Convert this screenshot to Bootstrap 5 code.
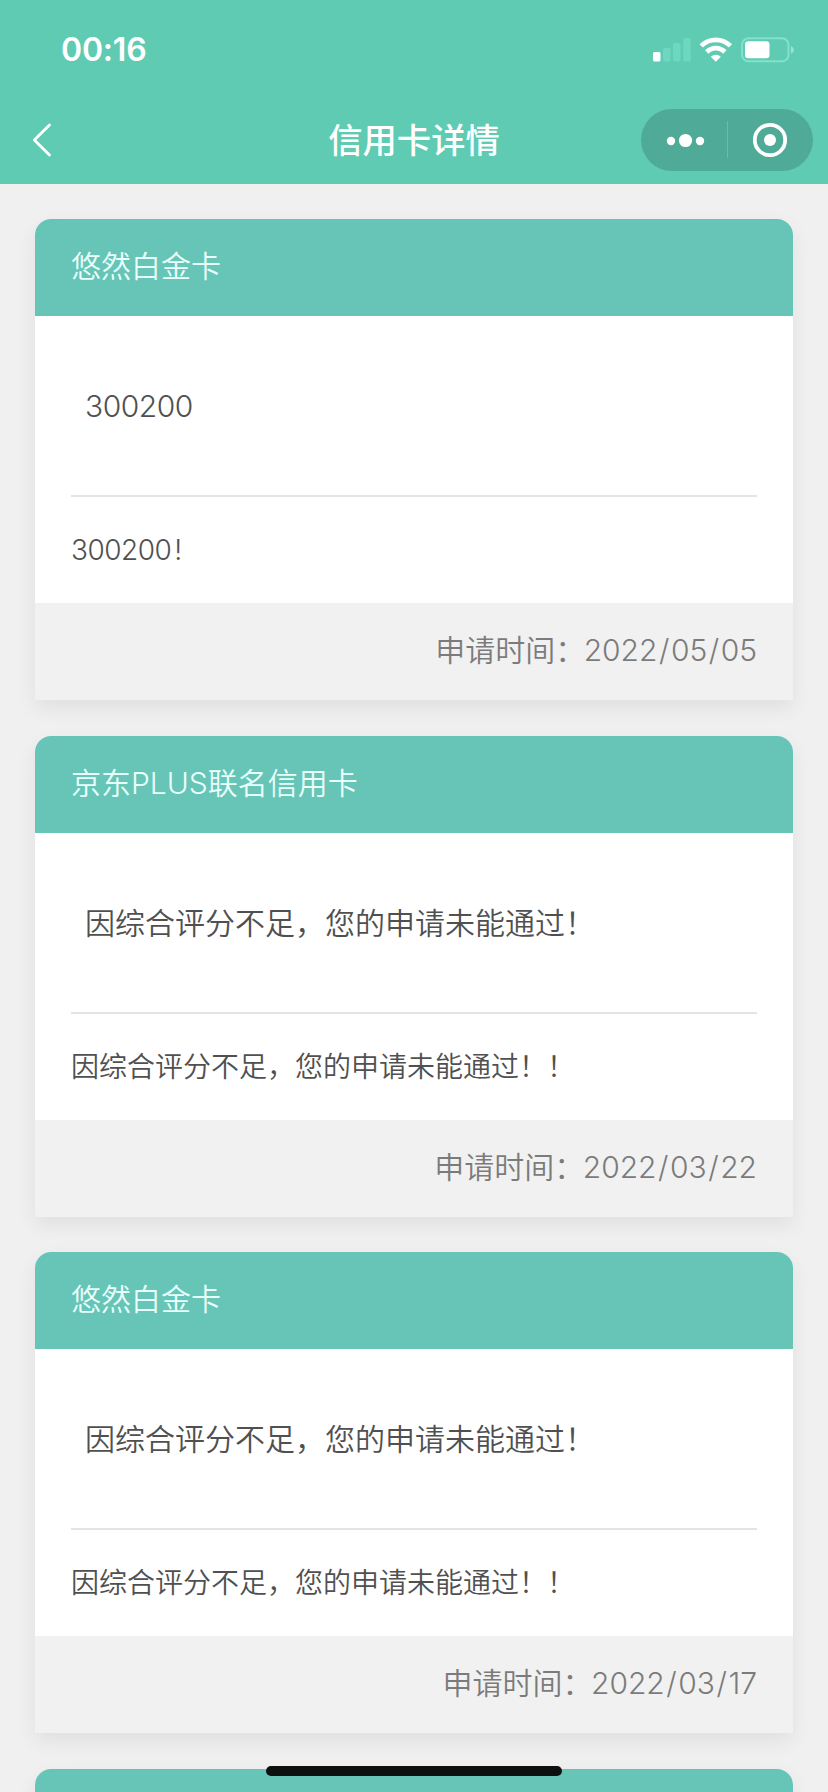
<!DOCTYPE html>
<html lang="zh-CN">
<head>
<meta charset="utf-8">
<meta name="viewport" content="width=device-width, initial-scale=1">
<title>信用卡详情</title>
<link href="https://cdn.jsdelivr.net/npm/bootstrap@5.3.0/dist/css/bootstrap.min.css" rel="stylesheet">
<style>
body{font-family:Inter,"Noto Sans CJK SC",sans-serif;background:#f0f0f0;height:1792px;overflow:hidden;color:#505050}
.topbar{background:#5fcbb3;height:184px;color:#fff}
.statusbar{height:100px;padding:0 33px 0 61px}
.clock{font-size:32px;font-weight:600;line-height:40px;letter-spacing:-.2px}
.titlebar{height:84px;display:grid;grid-template-columns:227px 1fr 227px;padding-top:1px}
.back-icon{margin-top:20px}
.page-title{font-size:34.3px;font-weight:500;line-height:48px}
.capsule{width:172px;height:62px;background:#4fab97;margin:8px 15px 0 auto}
.cards{padding:35px 35px 0;gap:35.5px;height:1608px;overflow:hidden}
.record{border:0;border-radius:16px 16px 0 0;height:481px;flex:none;box-shadow:0 8px 20px rgba(0,0,0,.07)}
.record .card-header{height:97px;background:#66c5b7;border:0;border-radius:16px 16px 0 0;color:#e9fffb;font-size:30px;font-weight:350;padding:0 36px 2px}
.record .card-body{padding:0 36px;background:#fff}
.result{height:181px;border-bottom:2px solid #e4e4e4;padding:2px 14px 0;font-size:30px}
.note{height:106px;font-size:28px}
.digits{letter-spacing:-.5px;font-weight:350}
.bang{margin-left:3px}
.slash{padding:0 1.5px}
.colon{letter-spacing:-1.5px}
.record .card-footer{height:97px;background:#f1f1f1;border:0;border-radius:0;color:#7b7b7b;font-size:30px;padding:0 36px 2px}
.thin{font-weight:350}
.last-record{height:70px}
.home-bar{width:296px;height:10px;background:#0c100f;bottom:16px;left:266px}
</style>
</head>
<body>
<header class="topbar">
  <div class="statusbar d-flex align-items-center justify-content-between">
    <span class="clock">00:16</span>
    <svg width="142" height="26" viewBox="0 0 142 26" fill="#fff">
      <rect y="15" width="7.5" height="9.5" rx="1.5"/>
      <g fill="#6dd7bf"><rect x="10" y="11" width="7.5" height="13.5" rx="1.5"/><rect x="20" y="6" width="7.5" height="18.5" rx="1.5"/><rect x="30.3" y="1" width="7.5" height="23.5" rx="1.5"/></g>
      <g fill="none" stroke="#fff" stroke-width="4.8"><path d="M48.2 8.9a20.5 20.5 0 0 1 29.2 0"/><path d="M53.8 15a12.5 12.5 0 0 1 18 0"/></g>
      <path d="M57.8 19.8a7 7 0 0 1 10 0L62.8 24.8z"/>
      <rect x="89" y="1.3" width="46.5" height="23" rx="6.5" fill="none" stroke="#83e1cd" stroke-width="2"/>
      <rect x="92" y="4.3" width="24.5" height="17" rx="3.2"/>
      <path d="M138 9q3 1.5 3 4t-3 4z" fill="#94e5d3"/>
    </svg>
  </div>
  <div class="titlebar">
    <svg class="back-icon ms-4" width="34" height="40" viewBox="0 0 34 40" fill="none" stroke="#fff" stroke-width="2.8" stroke-linecap="round" stroke-linejoin="round"><path d="M25.5 4 10.3 19 25.5 34"/></svg>
    <div class="page-title text-center pt-3">信用卡详情</div>
    <svg class="capsule rounded-pill" viewBox="0 0 172 62" fill="#fff"><circle cx="30" cy="32" r="4.2"/><circle cx="44.5" cy="31.5" r="6.6"/><circle cx="59" cy="32" r="4.2"/><path d="M86 12h1v37h-1z" fill="#6bbbab"/><circle cx="129" cy="31" r="15.2" fill="none" stroke="#fff" stroke-width="3.8"/><circle cx="129" cy="31" r="6"/></svg>
  </div>
</header>
<main class="cards d-flex flex-column">
  <section class="card record">
    <div class="card-header d-flex align-items-center">悠然白金卡</div>
    <div class="card-body"><div class="result d-flex align-items-center"><span class="digits">300200</span></div><div class="note d-flex align-items-center"><span class="digits">300200<span class="bang">!</span></span></div></div>
    <div class="card-footer d-flex align-items-center justify-content-end thin"><div>申请时间<span class="colon">：</span>2022<span class="slash">/</span>05<span class="slash">/</span>05</div></div>
  </section>
  <section class="card record">
    <div class="card-header d-flex align-items-center">京东PLUS联名信用卡</div>
    <div class="card-body"><div class="result d-flex align-items-center thin">因综合评分不足，您的申请未能通过！</div><div class="note d-flex align-items-center thin">因综合评分不足，您的申请未能通过！！</div></div>
    <div class="card-footer d-flex align-items-center justify-content-end thin"><div>申请时间<span class="colon">：</span>2022<span class="slash">/</span>03<span class="slash">/</span>22</div></div>
  </section>
  <section class="card record">
    <div class="card-header d-flex align-items-center">悠然白金卡</div>
    <div class="card-body"><div class="result d-flex align-items-center thin">因综合评分不足，您的申请未能通过！</div><div class="note d-flex align-items-center thin">因综合评分不足，您的申请未能通过！！</div></div>
    <div class="card-footer d-flex align-items-center justify-content-end thin"><div>申请时间<span class="colon">：</span>2022<span class="slash">/</span>03<span class="slash">/</span>17</div></div>
  </section>
  <section class="card record last-record"><div class="card-header"></div></section>
</main>
<div class="home-bar position-fixed rounded-pill"></div>
<script src="https://cdn.jsdelivr.net/npm/bootstrap@5.3.0/dist/js/bootstrap.bundle.min.js"></script>
</body>
</html>
